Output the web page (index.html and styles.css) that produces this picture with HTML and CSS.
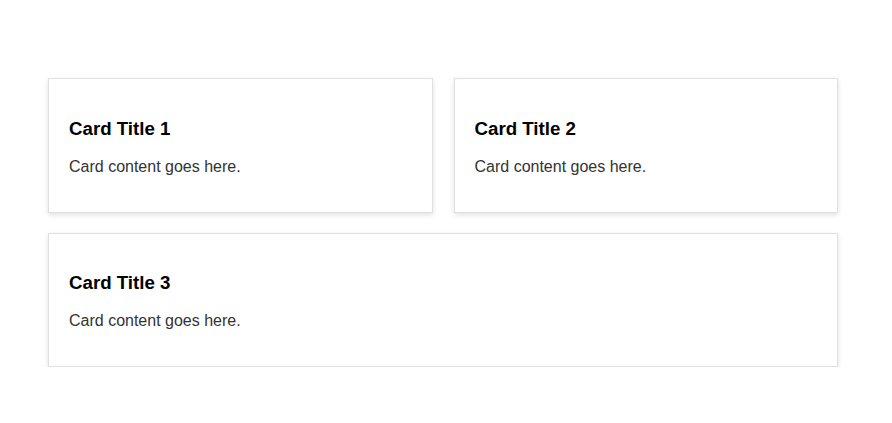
FILE: index.html
```html
<!DOCTYPE html>
<html>
<head>
<meta charset="utf-8">
<link rel="stylesheet" href="styles.css">
</head>
<body>
<div class="page">
  <div class="grid">
    <div class="card">
      <h3 class="card-title">Card Title 1</h3>
      <p class="card-text">Card content goes here.</p>
    </div>
    <div class="card">
      <h3 class="card-title">Card Title 2</h3>
      <p class="card-text">Card content goes here.</p>
    </div>
    <div class="card card-wide">
      <h3 class="card-title">Card Title 3</h3>
      <p class="card-text">Card content goes here.</p>
    </div>
  </div>
</div>
</body>
</html>
```
FILE: styles.css
```css
html, body {
  margin: 0;
  padding: 0;
  background: #fff;
}
body {
  font-family: "Liberation Sans", Arial, sans-serif;
}
.page {
  padding: 78px 54px 0 48px;
}
.grid {
  display: grid;
  grid-template-columns: 1fr 1fr;
  column-gap: 21px;
  row-gap: 20px;
}
.card {
  background: #fff;
  border: 1px solid #e0e0e0;
  box-shadow: 0 2px 5px rgba(0, 0, 0, 0.12);
  padding: 0 20px;
}
.card-wide {
  grid-column: 1 / span 2;
}
.card-title {
  font-size: 18.7px;
  font-weight: bold;
  color: #000;
  margin: 38.5px 0 18.7px;
  line-height: 21.5px;
}
.card-text {
  font-size: 16px;
  color: #333;
  margin: 0 0 36px;
  line-height: 18px;
}
```
